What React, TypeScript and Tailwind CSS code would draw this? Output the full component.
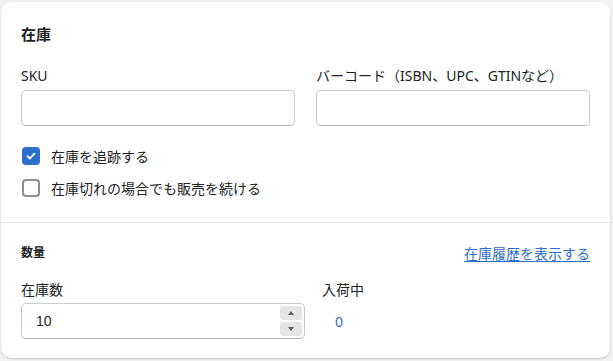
import React from 'react';

const font = { fontFamily: '"Noto Sans", "Noto Sans CJK JP", sans-serif' };

const Checkbox = ({ checked, label }: { checked?: boolean; label: string }) => (
  <label className="flex items-center h-5 gap-[11px] text-[14px] text-[#202223]">
    {checked ? (
      <span className="w-[18px] h-[18px] rounded-[4px] bg-[#2c6ecb] flex items-center justify-center">
        <svg width="12" height="12" viewBox="0 0 12 12" fill="none">
          <path d="M2.5 6.2l2.3 2.3 4.7-4.9" stroke="white" strokeWidth="1.8" strokeLinecap="round" strokeLinejoin="round" />
        </svg>
      </span>
    ) : (
      <span className="w-[18px] h-[18px] rounded-[4px] border-2 border-[#8c9196] bg-white"></span>
    )}
    <span>{label}</span>
  </label>
);

const App = () => {
  return (
    <main className="w-[613px] h-[361px] bg-[#f1f1f1] pt-[2px] pl-px pr-[3px] pb-[3px]" style={font}>
      <div className="w-full h-full bg-white rounded-[10px] shadow-[0_1px_2px_rgba(0,0,0,0.18)] flex flex-col">
        {/* Inventory section */}
        <section className="px-5 pt-5 pb-6">
          <h2 className="text-[15px] leading-6 font-bold text-[#202223]">在庫</h2>
          <div className="grid grid-cols-2 gap-[21px] mt-5">
            <div>
              <div className="text-[14px] leading-5 mb-1 text-[#202223]">SKU</div>
              <div className="h-9 rounded-[5px] border border-[#c9cccf] border-b-[#aeb4b9]"></div>
            </div>
            <div>
              <div className="text-[14px] leading-5 mb-1 text-[#202223]">バーコード（ISBN、UPC、GTINなど）</div>
              <div className="h-9 rounded-[5px] border border-[#c9cccf] border-b-[#aeb4b9]"></div>
            </div>
          </div>
          <div className="flex flex-col gap-3 mt-5 pl-px">
            <Checkbox checked label="在庫を追跡する" />
            <Checkbox label="在庫切れの場合でも販売を続ける" />
          </div>
        </section>

        <div className="border-t border-[#e1e3e5]"></div>

        {/* Quantity section */}
        <section className="px-5 pt-5">
          <div className="flex items-center justify-between h-5">
            <h3 className="text-[12px] font-bold text-[#202223]">数量</h3>
            <a className="text-[14px] text-[#2c6ecb] underline underline-offset-2">在庫履歴を表示する</a>
          </div>
          <div className="flex gap-[17px] mt-[17px]">
            <div className="w-[284px]">
              <div className="text-[14px] leading-5 mb-[3px] text-[#202223]">在庫数</div>
              <div className="h-9 rounded-[5px] border border-[#c9cccf] border-b-[#aeb4b9] flex items-center pl-[14px] pr-[2px]">
                <span className="flex-1 text-[14px] text-[#202223]" style={{ fontFamily: '"Liberation Sans", sans-serif' }}>10</span>
                <div className="flex flex-col gap-[2px]">
                  <div className="w-[22px] h-[14px] rounded-[3px] bg-[#e4e5e7] flex items-center justify-center">
                    <svg width="6" height="4" viewBox="0 0 6 4"><path d="M0 4L3 0L6 4Z" fill="#5c5f62" /></svg>
                  </div>
                  <div className="w-[22px] h-[14px] rounded-[3px] bg-[#e4e5e7] flex items-center justify-center">
                    <svg width="6" height="4" viewBox="0 0 6 4"><path d="M0 0L3 4L6 0Z" fill="#5c5f62" /></svg>
                  </div>
                </div>
              </div>
            </div>
            <div>
              <div className="text-[14px] leading-5 mb-[3px] text-[#202223]">入荷中</div>
              <div className="h-9 flex items-center pl-[13px] text-[14px] text-[#2c6ecb]">0</div>
            </div>
          </div>
        </section>
      </div>
    </main>
  );
};

export default App;
